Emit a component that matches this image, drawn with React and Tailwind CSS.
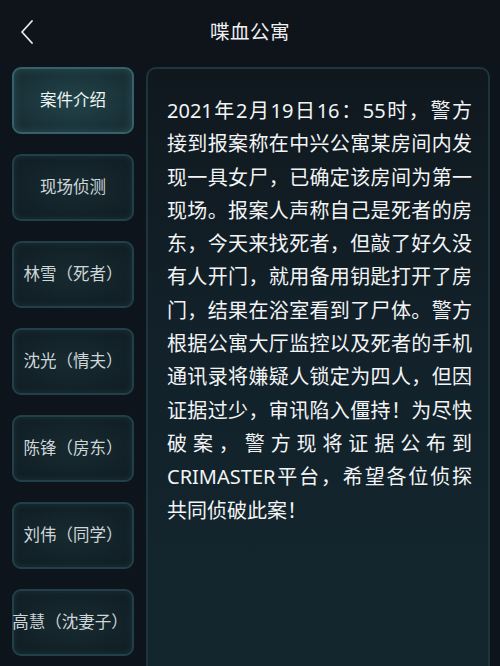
import React from 'react';

const tabs = [
  '案件介绍',
  '现场侦测',
  '林雪（死者）',
  '沈光（情夫）',
  '陈锋（房东）',
  '刘伟（同学）',
  '高慧（沈妻子）',
];

const lines = [
  '2021年2月19日16：55时，警方',
  '接到报案称在中兴公寓某房间内发',
  '现一具女尸，已确定该房间为第一',
  '现场。报案人声称自己是死者的房',
  '东，今天来找死者，但敲了好久没',
  '有人开门，就用备用钥匙打开了房',
  '门，结果在浴室看到了尸体。警方',
  '根据公寓大厅监控以及死者的手机',
  '通讯录将嫌疑人锁定为四人，但因',
  '证据过少，审讯陷入僵持！为尽快',
  '破案，警方现将证据公布到',
  'CRIMASTER平台，希望各位侦探',
  '共同侦破此案！',
];

const App = () => {
  return (
    <div
      className="w-[500px] h-[666px] overflow-hidden bg-[#0e141b] text-white flex flex-col"
      style={{ fontFamily: '"Noto Sans", "Noto Sans CJK SC", sans-serif' }}
    >
      {/* Header */}
      <div className="h-[64px] shrink-0 flex items-center relative bg-[#0f141b]">
        <svg className="absolute left-[19px] top-[19px]" width="18" height="26" viewBox="0 0 18 26">
          <path d="M13 2 L3 13 L13 24" fill="none" stroke="#e8eaec" strokeWidth="1.8" strokeLinecap="round" strokeLinejoin="round" />
        </svg>
        <div className="w-full text-center text-[19.5px] tracking-[0.5px] text-[#eef0f2]">喋血公寓</div>
      </div>

      <div className="flex flex-1 gap-[12px] pl-[12px] pr-[12px] pt-[3px] min-h-0">
        {/* Tabs */}
        <div className="w-[122px] shrink-0 flex flex-col gap-[20px]">
          {tabs.map((t, i) => (
            <div
              key={t}
              className={
                'h-[67px] shrink-0 rounded-[9px] flex items-center justify-center whitespace-nowrap text-[16.5px] ' +
                (i === 0
                  ? 'border-2 border-[#34626a] bg-[radial-gradient(ellipse_at_center,#22444a_0%,#1a343a_60%,#17292f_100%)] text-[#eef4f4] shadow-[inset_0_0_8px_rgba(80,140,150,0.35)]'
                  : 'border-2 border-[#22404a] bg-[radial-gradient(ellipse_at_center,#182b31_0%,#122228_60%,#101e24_100%)] text-[#cfd6d8] shadow-[inset_0_0_6px_rgba(60,110,120,0.25)]')
              }
            >
              <span className={i === 6 ? '-ml-[6px]' : ''}>{t}</span>
            </div>
          ))}
        </div>

        {/* Content panel */}
        <div className="flex-1 rounded-t-[10px] border-2 border-b-0 border-[#1d353c] bg-[linear-gradient(180deg,#10181e_0%,#12212a_45%,#13262e_100%)] pl-[19px] pr-[16px] pt-[25px]">
          <div className="w-[305px] text-[20px] leading-[33.3px] text-[#f2f4f5]">
            {lines.map((l, i) => (
              <div
                key={i}
                className={i === lines.length - 1 ? 'text-left' : 'text-justify [text-align-last:justify]'}
              >
                {l}
              </div>
            ))}
          </div>
        </div>
      </div>
    </div>
  );
};

export default App;
